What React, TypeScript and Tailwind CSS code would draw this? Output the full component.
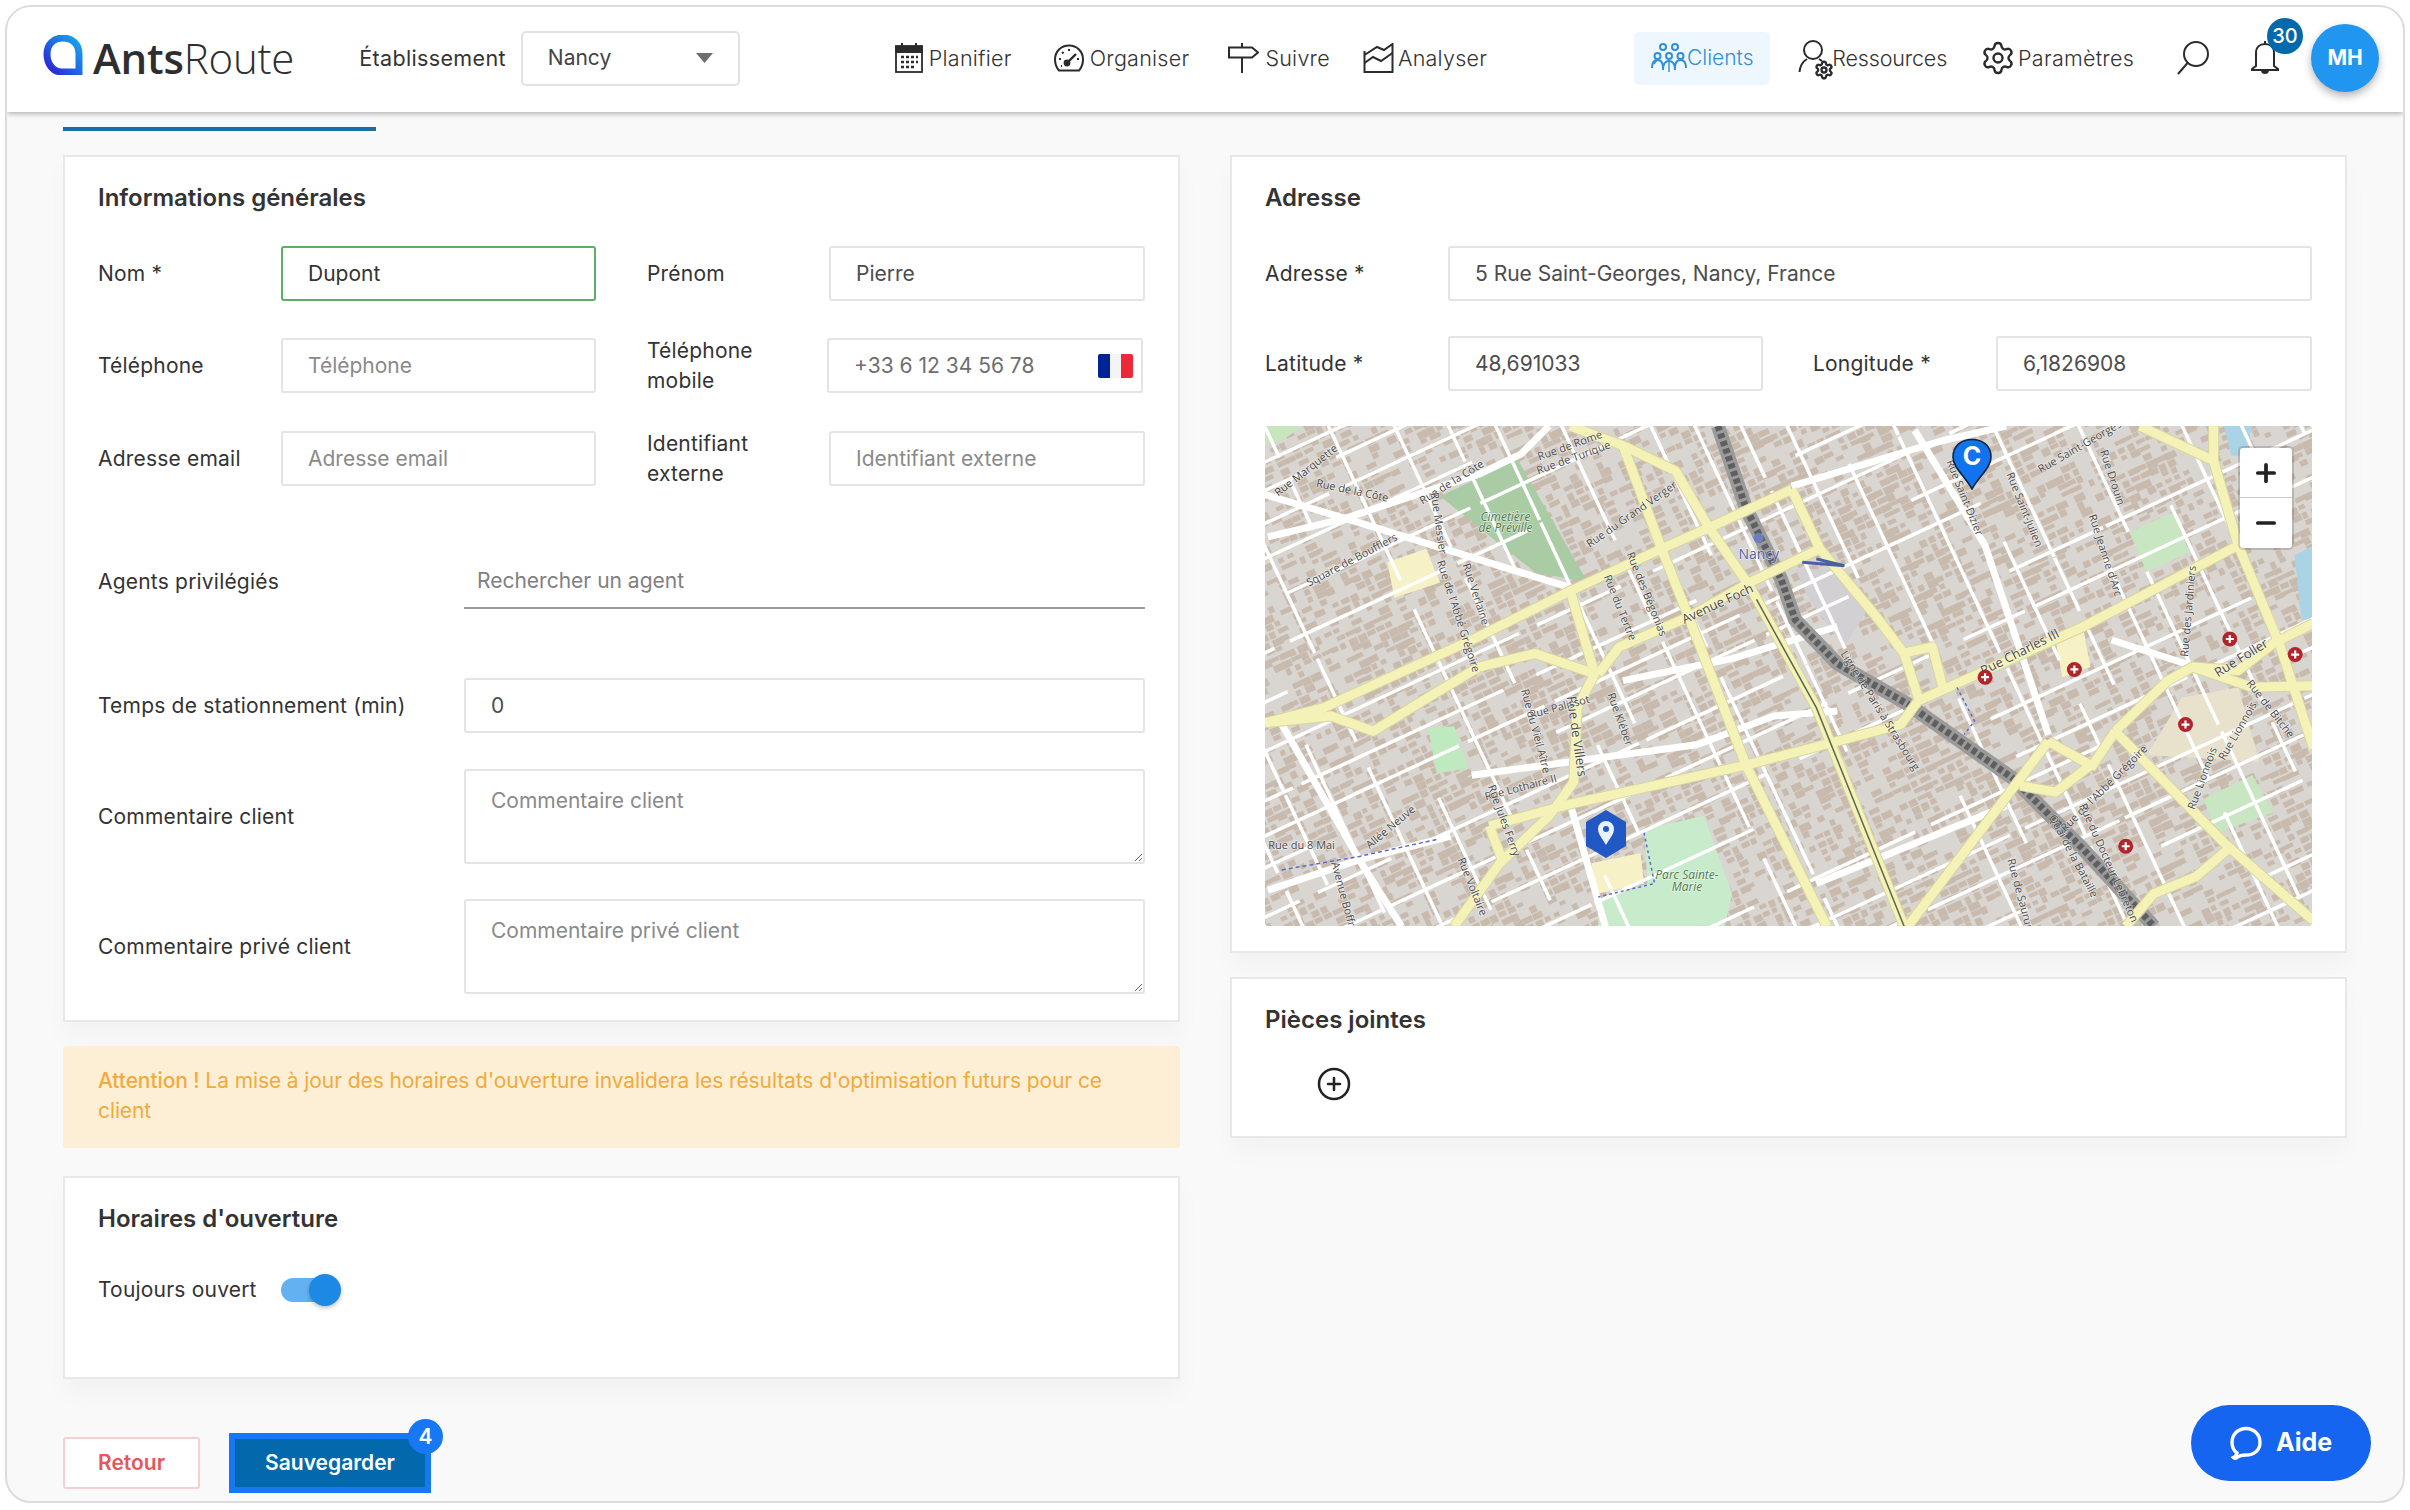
import { Plus, Minus, CirclePlus, Settings } from 'lucide-react'

// map drawing is done in the coordinates measured on the reference crop
const mx = (x: number) => (x - 36) / 1.418
const my = (y: number) => (y - 47) / 2.94
const pts = (p: number[][]) => p.map(([x, y]) => `${mx(x).toFixed(1)},${my(y).toFixed(1)}`).join(' ')

function rng(seed: number) {
  let s = seed
  return () => {
    s = (s * 16807) % 2147483647
    return s / 2147483647
  }
}

const rand = rng(4242)
const buildings: { x: number; y: number; w: number; h: number }[] = []
for (let y = -320; y < 820; y += 8) {
  for (let x = -260; x < 1320; x += 10) {
    if (rand() < 0.36) continue
    const a = (-25 * Math.PI) / 180
    const dx = x - 526
    const dy = y - 251
    const sx = 526 + dx * Math.cos(a) - dy * Math.sin(a)
    const sy = 251 + dx * Math.sin(a) + dy * Math.cos(a)
    if (sx < -20 || sx > 1072 || sy < -20 || sy > 523) continue
    buildings.push({ x, y, w: 5 + rand() * 7, h: 4 + rand() * 4 })
  }
}

const streets: { x1: number; y1: number; x2: number; y2: number }[] = []
for (let y = -320; y < 820; y += 26 + Math.floor(rand() * 22)) {
  let x = -260
  while (x < 1320) {
    const len = 60 + rand() * 260
    if (rand() > 0.25) streets.push({ x1: x, y1: y, x2: x + len, y2: y })
    x += len + rand() * 40
  }
}
for (let x = -260; x < 1320; x += 30 + Math.floor(rand() * 34)) {
  let y = -320
  while (y < 820) {
    const len = 50 + rand() * 200
    if (rand() > 0.3) streets.push({ x1: x, y1: y, x2: x, y2: y + len })
    y += len + rand() * 50
  }
}

const wideWhite = [
  [[36, 250], [150, 320], [470, 525]],
  [[40, 375], [150, 320], [230, 265], [340, 190], [400, 130], [440, 47]],
  [[785, 225], [1000, 90], [1090, 47]],
  [[545, 800], [700, 735], [850, 640]],
  [[40, 1420], [170, 1330], [300, 1260]],
  [[330, 1080], [470, 1040], [650, 990], [760, 905], [850, 890]],
  [[960, 60], [1060, 400], [1150, 960]],
  [[1240, 680], [1360, 760]],
  [[60, 930], [170, 1330], [230, 1527]],
  [[470, 1165], [520, 1527]],
  [[820, 1400], [950, 1290], [1090, 1170]],
]

const yellowRoads = [
  [[36, 925], [120, 880], [330, 680], [470, 535], [600, 410], [670, 345], [785, 235]],
  [[785, 235], [825, 410], [905, 610], [945, 720], [965, 850]],
  [[470, 47], [545, 105], [620, 180], [665, 340], [725, 520]],
  [[545, 105], [600, 410], [640, 620], [720, 1050], [835, 1527]],
  [[510, 780], [540, 700], [640, 610], [725, 510], [825, 410]],
  [[470, 535], [505, 780], [480, 880], [475, 1100], [440, 1200], [370, 1340], [305, 1527]],
  [[36, 925], [130, 905], [190, 950], [260, 860], [340, 760], [420, 720], [505, 780]],
  [[355, 1230], [470, 1165], [720, 1050], [940, 930], [965, 860], [1200, 640], [1420, 400]],
  [[1280, 47], [1385, 150], [1420, 400], [1480, 700], [1527, 1000]],
  [[1385, 47], [1385, 150]],
  [[1150, 980], [950, 1527]],
  [[1150, 980], [1210, 1050], [1160, 1130], [1110, 1110]],
  [[1245, 950], [1400, 1280], [1527, 1510]],
  [[1410, 1290], [1360, 1380], [1300, 1430], [1260, 1527]],
  [[1245, 950], [1210, 1060]],
  [[1245, 950], [1320, 800], [1355, 760], [1440, 820], [1527, 815]],
  [[1355, 760], [1420, 770], [1470, 690], [1527, 630]],
  [[940, 720], [985, 700], [1000, 820]],
  [[725, 520], [820, 880], [945, 1527]],
  [[355, 1230], [375, 1340]],
]

const labels: { x: number; y: number; r: number; t: string; s?: number; c?: string; i?: boolean }[] = [
  { x: 738, y: 430, r: 0, t: 'Nancy', s: 14, c: '#4a5fa8' },
  { x: 680, y: 575, r: -25, t: 'Avenue Foch', s: 13 },
  { x: 1110, y: 718, r: -27, t: 'Rue Charles III', s: 13 },
  { x: 1425, y: 735, r: -32, t: 'Rue Foller', s: 13 },
  { x: 478, y: 965, r: 82, t: 'Rue de Villers', s: 13 },
  { x: 378, y: 318, r: 0, t: 'Cimetière', s: 12, c: '#4f7a52', i: true },
  { x: 378, y: 352, r: 0, t: 'de Préville', s: 12, c: '#4f7a52', i: true },
  { x: 636, y: 1378, r: 0, t: 'Parc Sainte-', s: 12, c: '#4f7a52', i: true },
  { x: 636, y: 1412, r: 0, t: 'Marie', s: 12, c: '#4f7a52', i: true },
  { x: 302, y: 215, r: -32, t: 'Rue de la Côte' },
  { x: 160, y: 240, r: 12, t: 'Rue de la Côte' },
  { x: 95, y: 180, r: -38, t: 'Rue Marquette' },
  { x: 160, y: 445, r: -28, t: 'Square de Boufflers' },
  { x: 470, y: 107, r: -20, t: 'Rue de Rome' },
  { x: 475, y: 143, r: -20, t: 'Rue de Turique' },
  { x: 558, y: 310, r: -35, t: 'Rue du Grand Verger' },
  { x: 282, y: 335, r: 82, t: 'Rue Messier' },
  { x: 335, y: 545, r: 72, t: 'Rue Verlaine' },
  { x: 310, y: 610, r: 72, t: 'Rue de l\'Abbé Grégoire' },
  { x: 578, y: 545, r: 68, t: 'Rue des Bégonias' },
  { x: 540, y: 585, r: 68, t: 'Rue du Tertre' },
  { x: 455, y: 880, r: -15, t: 'Rue Palissot' },
  { x: 420, y: 950, r: 75, t: 'Rue du Vieil Aître' },
  { x: 540, y: 915, r: 70, t: 'Rue Kléber' },
  { x: 400, y: 1118, r: -15, t: 'Rue Lothaire II' },
  { x: 375, y: 1215, r: 70, t: 'Rue Jules Ferry' },
  { x: 215, y: 1235, r: -40, t: 'Allée Neuve' },
  { x: 88, y: 1290, r: 0, t: 'Rue du 8 Mai' },
  { x: 330, y: 1410, r: 68, t: 'Rue Voltaire' },
  { x: 1030, y: 260, r: 68, t: 'Rue Saint-Dizier' },
  { x: 1115, y: 295, r: 68, t: 'Rue Saint-Julien' },
  { x: 1195, y: 110, r: -30, t: 'Rue Saint-Georges' },
  { x: 1240, y: 200, r: 72, t: 'Rue Drouin' },
  { x: 1230, y: 430, r: 72, t: 'Rue Jeanne d\'Arc' },
  { x: 1350, y: 595, r: -85, t: 'Rue des Jardiniers' },
  { x: 910, y: 890, r: 58, t: 'Ligne de Paris à Strasbourg' },
  { x: 1230, y: 1120, r: -45, t: 'Rue de l\'Abbé Grégoire' },
  { x: 1420, y: 950, r: -60, t: 'Rue Lionnois' },
  { x: 1370, y: 1090, r: -70, t: 'Rue Lionnois' },
  { x: 1465, y: 885, r: 52, t: 'Rue de Bitche' },
  { x: 1110, y: 1440, r: 75, t: 'Rue de Saurupt' },
  { x: 1235, y: 1340, r: 66, t: 'Rue du Docteur Lebreton' },
  { x: 1185, y: 1320, r: 62, t: 'Quai de la Bataille' },
  { x: 150, y: 1460, r: 75, t: 'Avenue Boffrand' },
]

const hospitals = [[1060, 790], [1187, 767], [1408, 677], [1501, 723], [1345, 930], [1260, 1290]]

function MapImage() {
  return (
    <svg viewBox="0 0 1050 503" preserveAspectRatio="none" className="block h-full w-full">
      <rect width="1050" height="503" fill="#d9d6d2" />
      <g transform="rotate(-25 526 251)">
        {buildings.map((b, i) => (
          <rect key={i} x={b.x} y={b.y} width={b.w} height={b.h} fill="#c9baae" />
        ))}
      </g>
      {/* parks and land use */}
      <polygon points={pts([[285, 255], [395, 145], [495, 510], [420, 480]])} fill="#aacca5" />
      <polygon points={pts([[575, 1240], [660, 1200], [700, 1430], [690, 1527], [510, 1527], [510, 1450], [580, 1400]])} fill="#c8eccb" />
      <polygon points={pts([[268, 940], [305, 935], [325, 1060], [280, 1075]])} fill="#bfe9bf" />
      <polygon points={pts([[36, 47], [90, 47], [60, 90], [36, 100]])} fill="#c8e6bd" />
      <polygon points={pts([[1265, 360], [1330, 300], [1350, 420], [1290, 480]])} fill="#c8e6c2" />
      <polygon points={pts([[1370, 1150], [1440, 1080], [1470, 1190], [1390, 1250]])} fill="#c8e6c2" />
      <polygon points={pts([[500, 1340], [570, 1310], [575, 1400], [510, 1430]])} fill="#f6f2c6" />
      <polygon points={pts([[1160, 680], [1200, 650], [1210, 760], [1170, 790]])} fill="#f6f2c6" />
      <polygon points={pts([[210, 450], [265, 410], [285, 510], [220, 555]])} fill="#f6f2c6" />
      <polygon points={pts([[1340, 850], [1420, 820], [1450, 1040], [1290, 1020]])} fill="#e8e2cc" />
      <polygon points={pts([[790, 470], [850, 470], [890, 600], [860, 700], [810, 560]])} fill="#d3d0d4" />
      <polygon points={pts([[1500, 430], [1527, 400], [1527, 620], [1510, 620]])} fill="#abd3e6" />
      <polygon points={pts([[1400, 47], [1440, 47], [1430, 135], [1410, 135]])} fill="#abd3e6" />
      <g transform="rotate(-25 526 251)">
        {streets.map((s, i) => (
          <line key={i} x1={s.x1} y1={s.y1} x2={s.x2} y2={s.y2} stroke="#ffffff" strokeWidth="3.5" />
        ))}
      </g>
      {wideWhite.map((r, i) => (
        <polyline key={i} points={pts(r)} fill="none" stroke="#ffffff" strokeWidth="7" strokeLinejoin="round" />
      ))}
      {/* railway */}
      <polyline points={pts([[680, 47], [720, 290], [770, 500], [790, 620], [850, 750], [950, 870], [1100, 1090], [1200, 1300], [1300, 1527]])} fill="none" stroke="#9a9a9a" strokeWidth="14" />
      <polyline points={pts([[680, 47], [720, 290], [770, 500], [790, 620], [850, 750], [950, 870], [1100, 1090], [1200, 1300], [1300, 1527]])} fill="none" stroke="#5f5f5f" strokeWidth="7" strokeDasharray="5 3" />
      {yellowRoads.map((r, i) => (
        <polyline key={i} points={pts(r)} fill="none" stroke="#d8d5a0" strokeWidth="11" strokeLinejoin="round" />
      ))}
      {yellowRoads.map((r, i) => (
        <polyline key={i} points={pts(r)} fill="none" stroke="#f4f2b6" strokeWidth="9" strokeLinejoin="round" />
      ))}
      <polyline points={pts([[735, 560], [820, 880], [945, 1527]])} fill="none" stroke="#5b6656" strokeWidth="1.5" />
      <polyline points={pts([[60, 1360], [170, 1320], [280, 1270]])} fill="none" stroke="#5a6bd0" strokeWidth="1.5" strokeDasharray="4 3" />
      <polyline points={pts([[575, 1250], [590, 1400], [510, 1440]])} fill="none" stroke="#5a6bd0" strokeWidth="1.5" strokeDasharray="3 3" />
      <polyline points={pts([[1020, 820], [1045, 920], [1030, 960]])} fill="none" stroke="#5a6bd0" strokeWidth="1.5" strokeDasharray="3 3" />
      <polyline points={pts([[820, 440], [860, 460], [800, 450]])} fill="none" stroke="#4a5fa8" strokeWidth="3" />
      <circle cx={mx(738)} cy={my(378)} r="5" fill="#6a7fc0" />
      {labels.map((l, i) => (
        <text
          key={i}
          x={mx(l.x)}
          y={my(l.y)}
          transform={`rotate(${l.r} ${mx(l.x)} ${my(l.y)})`}
          textAnchor="middle"
          dominantBaseline="middle"
          fontSize={l.s ?? 11}
          fontStyle={l.i ? 'italic' : 'normal'}
          fill={l.c ?? '#4a4a4a'}
          fontFamily="'Open Sans', sans-serif"
          stroke="rgba(255,255,255,0.55)"
          strokeWidth="1.5"
          paintOrder="stroke"
        >
          {l.t}
        </text>
      ))}
      {hospitals.map(([x, y], i) => (
        <g key={i} transform={`translate(${mx(x)} ${my(y)})`}>
          <circle r="7.5" fill="#b0242c" />
          <path d="M-4 0H4M0 -4V4" stroke="#ffffff" strokeWidth="2.2" />
        </g>
      ))}
    </svg>
  )
}

function Logo() {
  return (
    <div className="flex items-center">
      <svg width="40" height="40" viewBox="0 0 40 40" className="mt-[-6px]">
        <defs>
          <linearGradient id="lg" x1="0" y1="1" x2="1" y2="0">
            <stop offset="0" stopColor="#2c1fd0" />
            <stop offset="0.55" stopColor="#1f6fe6" />
            <stop offset="1" stopColor="#16a9e8" />
          </linearGradient>
        </defs>
        <path d="M36 37H19C10 37 4 29 4 19C4 9 11 3 20 3C29 3 36 9 36 19Z" fill="none" stroke="url(#lg)" strokeWidth="7" />
      </svg>
      <span className="ml-[10px] font-['Open_Sans',sans-serif] text-[42px] leading-none tracking-[-0.2px] text-[#2e2e2e]">
        <span className="font-semibold">Ants</span>
        <span className="font-light">Route</span>
      </span>
    </div>
  )
}

function CalendarIcon() {
  return (
    <svg width="28" height="30" viewBox="0 0 28 30" fill="none" stroke="#2b2b2b" strokeWidth="1.8">
      <rect x="1" y="3" width="26" height="26" />
      <path d="M1 4h26v5H1z" fill="#2b2b2b" />
      <path d="M7 0v4M21 0v4" strokeWidth="2" />
      <path d="M6 14h3M11 14h3M16 14h3M21 14h2M6 19h3M11 19h3M16 19h3M21 19h2M6 24h3M11 24h3M16 24h3" strokeWidth="2.4" />
    </svg>
  )
}

function GaugeIcon() {
  return (
    <svg width="30" height="28" viewBox="0 0 30 28" fill="none" stroke="#2b2b2b" strokeWidth="2">
      <path d="M5 26.5C2.5 23.5 1 20 1 15.5C1 7.5 7 1.5 15 1.5S29 7.5 29 15.5C29 20 27.5 23.5 25 26.5Z" />
      <path d="M13 19L22 10" strokeWidth="2.4" />
      <circle cx="13" cy="19" r="2.4" fill="#2b2b2b" />
      <path d="M5 15h2M15 5v2M8 8l1.5 1.5M7 22h1M23 15h2" />
    </svg>
  )
}

function SignIcon() {
  return (
    <svg width="31" height="30" viewBox="0 0 31 30" fill="none" stroke="#2b2b2b" strokeWidth="2">
      <path d="M1 4.5H24L30 9.5L24 14.5H1Z" />
      <path d="M14 0V4M14 15V30" />
    </svg>
  )
}

function ChartIcon() {
  return (
    <svg width="31" height="30" viewBox="0 0 31 30" fill="none" stroke="#2b2b2b" strokeWidth="2">
      <path d="M1.5 8V29H29.5V1L21 7L14 4L1.5 12" />
      <path d="M1.5 20L10 14L18 18L29.5 10" />
    </svg>
  )
}

function ClientsIcon() {
  return (
    <svg width="36" height="30" viewBox="0 0 36 30" fill="none" stroke="#2f8fd8" strokeWidth="2">
      <circle cx="12" cy="4" r="3" />
      <circle cx="24" cy="4" r="3" />
      <circle cx="6.5" cy="13" r="3" />
      <circle cx="18" cy="13" r="3" />
      <circle cx="29.5" cy="13" r="3" />
      <path d="M1 25C1 20 3 17 6.5 17S12 20 12 25M12 27C12 22 14 18 18 18S24 22 24 27M24 25C24 20 26 17 29.5 17S35 20 35 25" />
      <path d="M6 17L3 21M18 18V29" strokeWidth="1.4" />
    </svg>
  )
}

function ResourceIcon() {
  return (
    <div className="relative h-[36px] w-[34px]">
      <svg width="30" height="34" viewBox="0 0 30 34" fill="none" stroke="#2b2b2b" strokeWidth="2" className="absolute left-0 top-0">
        <circle cx="15" cy="10" r="9" />
        <path d="M9 19C4 22 2 27 1.5 32" />
        <path d="M21 19L24 21" />
      </svg>
      <Settings size={20} strokeWidth={2.8} className="absolute right-[-2px] bottom-[-4px] text-[#2b2b2b]" />
    </div>
  )
}

function SearchIcon() {
  return (
    <svg width="32" height="34" viewBox="0 0 32 34" fill="none" stroke="#2b2b2b" strokeWidth="2">
      <circle cx="19" cy="13" r="12" />
      <path d="M10.5 22L1 33" />
    </svg>
  )
}

function BellIcon() {
  return (
    <svg width="28" height="36" viewBox="0 0 28 36" fill="none" stroke="#2b2b2b" strokeWidth="2">
      <path d="M14 1V4M5 26V13C5 7 9 4 14 4S23 7 23 13V26L27 29V30H1V29Z" />
      <path d="M11 30C11 34 17 34 17 30" fill="#2b2b2b" />
    </svg>
  )
}

function NavItem({ icon, label, className, textClass }: { icon: React.ReactNode; label: string; className?: string; textClass?: string }) {
  return (
    <div className={`flex items-center gap-[6px] ${className ?? ''}`}>
      {icon}
      <span className={`text-[21.5px] font-light text-[#333] ${textClass ?? 'tracking-[0.25px]'}`}>{label}</span>
    </div>
  )
}

const inputClass =
  'h-[55px] rounded-[3px] border-2 bg-white px-[25px] text-[21px] outline-none placeholder:text-[#8a8a8a]'
const cardClass = 'border-2 border-[#e8e8ea] bg-white shadow-[0_14px_24px_rgba(0,0,0,0.03)]'
const headingClass = 'text-[24px] font-semibold leading-[34px] text-[#333]'
const labelClass = 'shrink-0 text-[21px] leading-[30px] tracking-[0.2px] text-[#333]'

function GeneralCard() {
  return (
    <div className={`${cardClass} h-[867px] px-[33px] pt-[24px]`}>
      <h2 className={headingClass}>Informations générales</h2>

      <div className="mt-[31px] flex h-[55px] items-center">
        <label className={`${labelClass} w-[183px]`}>Nom *</label>
        <input className={`${inputClass} w-[315px] border-[#5cae66] text-[#333]`} value="Dupont" readOnly />
        <label className={`${labelClass} ml-[51px] w-[182px]`}>Prénom</label>
        <input className={`${inputClass} w-[316px] border-[#e4e4e4] text-[#4d4d4d]`} value="Pierre" readOnly />
      </div>

      <div className="mt-[37px] flex h-[55px] items-center">
        <label className={`${labelClass} w-[183px]`}>Téléphone</label>
        <input className={`${inputClass} w-[315px] border-[#e4e4e4]`} placeholder="Téléphone" readOnly />
        <label className={`${labelClass} ml-[51px] w-[180px]`}>
          Téléphone
          <br />
          mobile
        </label>
        <div className="relative">
          <input className={`${inputClass} w-[316px] border-[#e4e4e4] text-[#6e6e6e]`} value="+33 6 12 34 56 78" readOnly />
          <div className="absolute right-[10px] top-[16px] flex h-[24px] w-[35px] overflow-hidden rounded-[2px]">
            <div className="flex-1 bg-[#002395]" />
            <div className="flex-1 bg-[#f4f4f6]" />
            <div className="flex-1 bg-[#ed2939]" />
          </div>
        </div>
      </div>

      <div className="mt-[38px] flex h-[55px] items-center">
        <label className={`${labelClass} w-[183px]`}>Adresse email</label>
        <input className={`${inputClass} w-[315px] border-[#e4e4e4]`} placeholder="Adresse email" readOnly />
        <label className={`${labelClass} ml-[51px] w-[182px]`}>
          Identifiant
          <br />
          externe
        </label>
        <input className={`${inputClass} w-[316px] border-[#e4e4e4]`} placeholder="Identifiant externe" readOnly />
      </div>

      <div className="mt-[68px] flex items-center">
        <label className={`${labelClass} w-[366px]`}>Agents privilégiés</label>
        <input
          className="h-[55px] w-[681px] border-b-2 border-[#9a9a9a] bg-transparent px-[13px] text-[21px] outline-none placeholder:text-[#808080]"
          placeholder="Rechercher un agent"
          readOnly
        />
      </div>

      <div className="mt-[69px] flex items-center">
        <label className={`${labelClass} w-[366px]`}>Temps de stationnement (min)</label>
        <input className={`${inputClass} w-[681px] border-[#e4e4e4] text-[#4d4d4d]`} value="0" readOnly />
      </div>

      <div className="mt-[36px] flex items-center">
        <label className={`${labelClass} w-[366px]`}>Commentaire client</label>
        <textarea
          className="h-[95px] w-[681px] rounded-[3px] border-2 border-[#e4e4e4] px-[25px] py-[16px] text-[21px] leading-[28px] outline-none placeholder:text-[#8a8a8a]"
          placeholder="Commentaire client"
          readOnly
        />
      </div>

      <div className="mt-[35px] flex items-center">
        <label className={`${labelClass} w-[366px]`}>Commentaire privé client</label>
        <textarea
          className="h-[95px] w-[681px] rounded-[3px] border-2 border-[#e4e4e4] px-[25px] py-[16px] text-[21px] leading-[28px] outline-none placeholder:text-[#8a8a8a]"
          placeholder="Commentaire privé client"
          readOnly
        />
      </div>
    </div>
  )
}

function AddressCard() {
  return (
    <div className={`${cardClass} h-[798px] px-[33px] pt-[24px]`}>
      <h2 className={headingClass}>Adresse</h2>

      <div className="mt-[31px] flex items-center">
        <label className={`${labelClass} w-[183px]`}>Adresse *</label>
        <input className={`${inputClass} min-w-0 flex-1 border-[#e4e4e4] text-[#4d4d4d]`} value="5 Rue Saint-Georges, Nancy, France" readOnly />
      </div>

      <div className="mt-[35px] flex items-center">
        <label className={`${labelClass} w-[183px]`}>Latitude *</label>
        <input className={`${inputClass} w-[315px] border-[#e4e4e4] text-[#4d4d4d]`} value="48,691033" readOnly />
        <label className={`${labelClass} ml-[50px] w-[183px]`}>Longitude *</label>
        <input className={`${inputClass} min-w-0 flex-1 border-[#e4e4e4] text-[#4d4d4d]`} value="6,1826908" readOnly />
      </div>

      <div className="relative mt-[35px] h-[500px] overflow-hidden rounded-[3px]">
        <MapImage />

        {/* client marker */}
        <svg width="42" height="52" viewBox="0 0 42 52" className="absolute left-[686px] top-[12px]">
          <path d="M21 51C14 38 2 30 2 19C2 8 10 1.5 21 1.5S40 8 40 19C40 30 28 38 21 51Z" fill="#1273ee" stroke="#10233f" strokeWidth="1.6" />
          <text x="21" y="27" textAnchor="middle" fontSize="25" fontWeight="700" fill="#ffffff" fontFamily="Inter, sans-serif">
            C
          </text>
        </svg>

        {/* depot marker */}
        <svg width="40" height="48" viewBox="0 0 40 48" className="absolute left-[321px] top-[384px]">
          <path d="M20 0L40 12V36L20 48L0 36V12Z" fill="#2158c4" />
          <path d="M20 35C16 28 12 24 12 19A8 8 0 0 1 28 19C28 24 24 28 20 35Z" fill="#e9f1fb" />
          <circle cx="20" cy="19" r="3" fill="#2158c4" />
        </svg>

        {/* zoom control */}
        <div className="absolute right-[20px] top-[22px] flex w-[52px] flex-col rounded-[3px] bg-white shadow-[0_0_0_2px_rgba(0,0,0,0.15)]">
          <div className="flex h-[50px] items-center justify-center border-b border-[#ccc]">
            <Plus size={28} strokeWidth={3.2} className="text-[#222]" />
          </div>
          <div className="flex h-[50px] items-center justify-center">
            <Minus size={28} strokeWidth={3.2} className="text-[#222]" />
          </div>
        </div>
      </div>
    </div>
  )
}

export default function App() {
  return (
    <div className="h-[1510px] w-[2410px] bg-white p-[5px] font-['Inter',sans-serif]">
      <div className="relative flex h-[1498px] w-[2400px] flex-col overflow-hidden rounded-[26px] border-2 border-[#dcdcdc] bg-[#f9f9fa]">
        {/* Header */}
        <header className="relative z-10 flex h-[105px] shrink-0 items-center bg-white pb-[3px] pl-[36px] shadow-[0_2px_5px_rgba(0,0,0,0.28)]">
          <Logo />
          <span className="ml-[65px] text-[21.5px] tracking-[0.35px] text-[#333]">Établissement</span>
          <div className="ml-[15px] flex h-[55px] w-[219px] items-center justify-between rounded-[5px] border-2 border-[#e2e2e2] pl-[25px] pr-[25px]">
            <span className="text-[21px] text-[#444]">Nancy</span>
            <svg width="17" height="10" viewBox="0 0 17 10">
              <path d="M0 0H17L8.5 10Z" fill="#6e6e6e" />
            </svg>
          </div>

          <NavItem icon={<CalendarIcon />} label="Planifier" className="ml-[155px]" />
          <NavItem icon={<GaugeIcon />} label="Organiser" className="ml-[42px]" />
          <NavItem icon={<SignIcon />} label="Suivre" className="ml-[39px]" />
          <NavItem icon={<ChartIcon />} label="Analyser" className="ml-[33px] !gap-[4px]" />

          <div className="ml-[147px] flex h-[53px] w-[136px] items-center justify-center rounded-[5px] bg-[#eff7fe]">
            <ClientsIcon />
            <span className="text-[21px] font-light text-[#2f8fd8]">Clients</span>
          </div>

          <NavItem
            icon={<ResourceIcon />}
            label="Ressources"
            className="ml-[28px] !gap-0"
            textClass="tracking-[-0.15px]"
          />
          <NavItem
            icon={<Settings size={36} strokeWidth={1.6} className="text-[#2b2b2b]" />}
            label="Paramètres"
            className="ml-[33px] !gap-[2px]"
          />

          <div className="ml-[43px]">
            <SearchIcon />
          </div>

          <div className="relative ml-[42px]">
            <BellIcon />
            <div className="absolute left-[16px] top-[-22px] flex h-[36px] w-[36px] items-center justify-center rounded-full bg-[#0468ad] text-[20px] font-medium text-white">
              30
            </div>
          </div>

          <div className="ml-[32px] flex h-[68px] w-[68px] items-center justify-center rounded-full bg-[#2196f0] text-[21px] font-bold text-white shadow-[0_4px_8px_rgba(0,0,0,0.3)]">
            MH
          </div>
        </header>

        {/* Tab underline */}
        <div className="ml-[56px] mt-[15px] h-[4px] w-[313px] bg-[#1a6ea8]" />

        <div className="mt-[24px] flex items-start gap-[50px] px-[56px]">
          {/* Left column */}
          <div className="w-[1117px] shrink-0">
            <GeneralCard />

            <div className="mt-[24px] h-[102px] rounded-[4px] bg-[#fcefd5] px-[35px] py-[20px] text-[21px] leading-[30px] tracking-[-0.1px] text-[#f0ab3c]">
              <span className="font-medium">Attention !</span> La mise à jour des horaires d'ouverture invalidera les
              résultats d'optimisation futurs pour ce client
            </div>

            <div className={`${cardClass} mt-[28px] h-[203px] px-[33px] pt-[24px]`}>
              <h2 className={headingClass}>Horaires d'ouverture</h2>
              <div className="mt-[39px] flex items-center">
                <span className={labelClass}>Toujours ouvert</span>
                <div className="relative ml-[24px] h-[24px] w-[52px] rounded-full bg-[#64b1f1]">
                  <div className="absolute right-[-8px] top-[-4px] h-[32px] w-[32px] rounded-full bg-[#1e88e5] shadow-[0_2px_4px_rgba(0,0,0,0.25)]" />
                </div>
              </div>
            </div>

            <div className="mt-[54px] flex items-center gap-[29px]">
              <button className="h-[52px] w-[137px] rounded-[3px] border-2 border-[#f5d0d0] bg-white text-[21px] font-semibold text-[#e4575a]">
                Retour
              </button>
              <div className="relative">
                <button className="h-[60px] w-[202px] border-[6px] border-[#1877f2] bg-[#0468ad] text-[21px] font-semibold text-white">
                  Sauvegarder
                </button>
                <div className="absolute right-[-12px] top-[-14px] flex h-[35px] w-[35px] items-center justify-center rounded-full bg-[#1877f2] text-[21px] font-semibold text-white">
                  4
                </div>
              </div>
            </div>
          </div>

          {/* Right column */}
          <div className="w-[1117px] shrink-0">
            <AddressCard />
            <div className={`${cardClass} mt-[24px] h-[161px] px-[33px] pt-[24px]`}>
              <h2 className={headingClass}>Pièces jointes</h2>
              <CirclePlus size={36} strokeWidth={1.7} className="ml-[51px] mt-[29px] text-[#222]" />
            </div>
          </div>
        </div>

        {/* Aide */}
        <div className="absolute bottom-[20px] right-[32px] flex h-[76px] w-[180px] items-center justify-center gap-[14px] rounded-full bg-[#1565f0] text-[25px] font-bold text-white">
          <svg width="32" height="34" viewBox="0 0 32 34" fill="none" stroke="#ffffff" strokeWidth="3.4">
            <path d="M7 27C3.5 24.5 2 20.5 2 16.5C2 8.5 8 2.5 16 2.5S30 8.5 30 16.5S24 29 16 29C13 29 10 29 7 31.5C5.5 32.5 4 32 3.5 31.5C5.5 30.5 6.5 29 7 27Z" />
          </svg>
          Aide
        </div>
      </div>
    </div>
  )
}
